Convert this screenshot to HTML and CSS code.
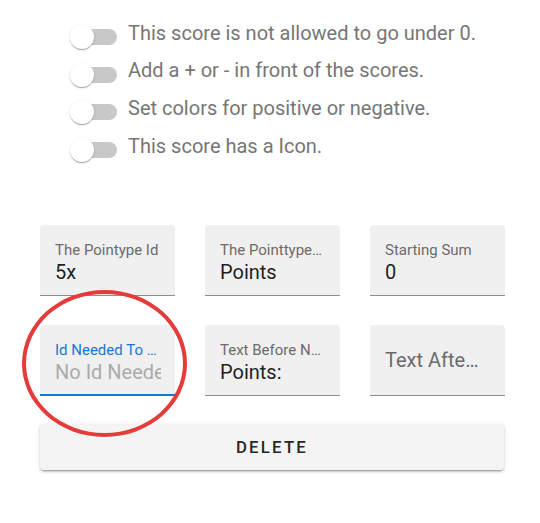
FILE: index.html
```html
<!DOCTYPE html>
<html>
<head>
<meta charset="utf-8">
<link rel="stylesheet" href="styles.css">
</head>
<body>
<div class="page">
  <div class="toggles">
    <div class="toggle-row"><span class="switch"><span class="track"></span><span class="thumb"></span></span><span class="toggle-label">This score is not allowed to go under 0.</span></div>
    <div class="toggle-row"><span class="switch"><span class="track"></span><span class="thumb"></span></span><span class="toggle-label">Add a + or - in front of the scores.</span></div>
    <div class="toggle-row"><span class="switch"><span class="track"></span><span class="thumb"></span></span><span class="toggle-label">Set colors for positive or negative.</span></div>
    <div class="toggle-row"><span class="switch"><span class="track"></span><span class="thumb"></span></span><span class="toggle-label">This score has a Icon.</span></div>
  </div>

  <div class="fields">
    <div class="field">
      <div class="label">The Pointype Id</div>
      <div class="value">5x</div>
    </div>
    <div class="field">
      <div class="label">The Pointtype…</div>
      <div class="value">Points</div>
    </div>
    <div class="field">
      <div class="label">Starting Sum</div>
      <div class="value">0</div>
    </div>
    <div class="field focused">
      <div class="label">Id Needed To …</div>
      <div class="value placeholder">No Id Needed</div>
    </div>
    <div class="field">
      <div class="label">Text Before N…</div>
      <div class="value">Points:</div>
    </div>
    <div class="field empty">
      <div class="big-label">Text Afte…</div>
    </div>
  </div>

  <button class="delete">DELETE</button>

  <div class="highlight"></div>
</div>
</body>
</html>
```

FILE: styles.css
```css
html, body {
  margin: 0;
  padding: 0;
  background: #ffffff;
}

.page {
  position: relative;
  width: 540px;
  height: 523px;
  font-family: Roboto, "Liberation Sans", sans-serif;
}

.toggles {
  display: flex;
  flex-direction: column;
  padding-top: 14px;
  padding-left: 70px;
}

.toggle-row {
  display: flex;
  align-items: center;
  height: 37.6px;
}

.switch {
  position: relative;
  width: 47px;
  height: 24px;
  margin-top: 9px;
  flex: none;
}

.track {
  position: absolute;
  left: 6px;
  top: 4px;
  width: 41px;
  height: 16px;
  border-radius: 8px;
  background: #c8c8c8;
}

.thumb {
  position: absolute;
  left: 0;
  top: 0;
  width: 24px;
  height: 24px;
  border-radius: 50%;
  background: #ffffff;
  box-shadow: 0 2px 1px -1px rgba(0,0,0,0.2), 0 1px 1px 0 rgba(0,0,0,0.14), 0 1px 3px 0 rgba(0,0,0,0.12);
}

.toggle-label {
  margin-left: 11px;
  font-size: 20px;
  color: #767676;
  white-space: nowrap;
}

.fields {
  display: grid;
  grid-template-columns: repeat(3, 135px);
  column-gap: 30px;
  row-gap: 29px;
  margin-top: 61px;
  margin-left: 40px;
}

.field {
  height: 71px;
  box-sizing: border-box;
  background: #f0f0f0;
  border-radius: 4px 4px 0 0;
  border-bottom: 1px solid #8f8f8f;
  padding: 17px 12px 0 15px;
  display: flex;
  flex-direction: column;
}

.field.focused {
  border-bottom: 2px solid #1976d2;
  padding-right: 14px;
}

.label {
  font-size: 15px;
  line-height: 17px;
  color: #6b6b6b;
  white-space: nowrap;
  overflow: hidden;
}

.focused .label {
  color: #1976d2;
}

.value {
  margin-top: 1.5px;
  font-size: 20px;
  line-height: 23px;
  color: #1f1f1f;
  white-space: nowrap;
  overflow: hidden;
}

.value.placeholder {
  color: #ababab;
}

.field.empty {
  justify-content: center;
  padding-top: 0;
}

.big-label {
  font-size: 20px;
  line-height: 23px;
  color: #6b6b6b;
  white-space: nowrap;
  overflow: hidden;
}

.delete {
  display: block;
  margin: 28px 0 0 40px;
  width: 464px;
  height: 46px;
  border: none;
  border-radius: 4px;
  background: #f4f4f4;
  box-shadow: 0 3px 1px -2px rgba(0,0,0,0.2), 0 2px 2px 0 rgba(0,0,0,0.14), 0 1px 5px 0 rgba(0,0,0,0.12);
  font-family: Roboto, "Liberation Sans", sans-serif;
  font-size: 16.8px;
  font-weight: 500;
  letter-spacing: 2.2px;
  color: #262626;
  padding: 0;
}

.highlight {
  position: absolute;
  left: 22px;
  top: 290px;
  width: 157px;
  height: 139px;
  border: 4px solid #e53b3b;
  border-radius: 50%;
  pointer-events: none;
}
```
